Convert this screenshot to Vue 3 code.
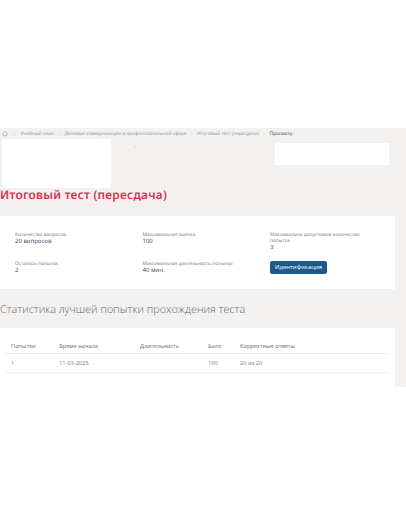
<script setup>
const crumbs = ['Учебный план', 'Деловые коммуникации в профессиональной сфере', 'Итоговый тест (пересдача)']
const facts = [
  { label: 'Количество вопросов', value: '20 вопросов' },
  { label: 'Максимальная оценка', value: '100' },
  { label: 'Максимально допустимое количество попыток', value: '3' },
  { label: 'Осталось попыток', value: '2' },
  { label: 'Максимальная длительность попытки', value: '40 мин.' },
]
const heads = ['Попытки', 'Время начала', 'Длительность', 'Балл', 'Корректные ответы']
const cells = ['1', '11-03-2025', '', '100', '20 из 20']
</script>

<template>
  <div class="page">
    <div class="shell">
      <nav class="crumbs">
        <svg class="home" viewBox="0 0 12 12" width="6" height="7" fill="none" stroke="#8a8f94" stroke-width="1">
          <path d="M1 6 6 1.5 11 6M2.5 5v5.5h7V5" />
        </svg>
        <template v-for="c in crumbs" :key="c">
          <span class="sep">›</span>
          <span>{{ c }}</span>
        </template>
        <span class="sep">›</span>
        <span class="current">Просмотр</span>
      </nav>

      <div class="top">
        <div class="logo-box"></div>
        <span class="top-sep">›</span>
        <div class="side-box"></div>
      </div>

      <h1 class="title">Итоговый тест (пересдача)</h1>

      <section class="card facts">
        <div v-for="f in facts" :key="f.label" class="fact">
          <div class="label">{{ f.label }}</div>
          <div class="value">{{ f.value }}</div>
        </div>
        <div class="fact">
          <button class="btn">Идентификация</button>
        </div>
      </section>

      <h2 class="subtitle">Статистика лучшей попытки прохождения теста</h2>

      <section class="card stats">
        <div class="row head">
          <span v-for="h in heads" :key="h">{{ h }}</span>
        </div>
        <div class="row body">
          <span v-for="(c, i) in cells" :key="i">{{ c }}</span>
        </div>
      </section>
    </div>
  </div>
</template>

<style>
html, body { margin: 0; background: #fff; }
</style>

<style scoped>
.page {
  width: 406px;
  height: 516px;
  padding-top: 128px;
  box-sizing: border-box;
  background: #fff;
  font-family: "Open Sans", "Noto Sans", sans-serif;
  text-rendering: geometricPrecision;
  overflow: hidden;
}
.shell {
  height: 259px;
  background: #f2f1f0;
  overflow: hidden;
}
.crumbs {
  height: 11px;
  display: flex;
  align-items: center;
  padding-left: 2px;
  font-size: 4.75px;
  color: #8d9195;
  white-space: nowrap;
}
.home { margin-right: 1px; }
.sep { margin: 0 4.5px 0 4.5px; color: #b5b8ba; }
.sep:first-of-type { margin-right: 5.5px; }
.current { color: #43474b; }
.top {
  display: flex;
  align-items: flex-start;
  height: 49px;
}
.logo-box {
  width: 109px;
  height: 49px;
  margin-left: 2px;
  background: #fff;
}
.top-sep {
  margin: 3px 0 0 23px;
  font-size: 8px;
  line-height: 10px;
  color: #d2d2d2;
}
.side-box {
  width: 114px;
  height: 22px;
  margin: 4px 0 0 139px;
  background: #fff;
}
.title {
  margin: 0;
  height: 28px;
  font-family: "Noto Sans", sans-serif;
  font-size: 11.9px;
  line-height: 15px;
  font-weight: 600;
  letter-spacing: 0.25px;
  color: #d8324f;
  white-space: nowrap;
}
.card {
  width: 395px;
  background: #fff;
}
.facts {
  box-sizing: border-box;
  height: 73px;
  padding: 15.5px 15px 0;
  display: grid;
  grid-template-columns: 127.5px 127.5px 110px;
  grid-template-rows: 28px 28px;
  row-gap: 1px;
}
.label {
  font-size: 4.8px;
  line-height: 6px;
  color: #70757a;
}
.value {
  margin-top: 0.5px;
  font-size: 6px;
  line-height: 6.5px;
  color: #39434d;
}
.btn {
  display: block;
  width: 57px;
  height: 13px;
  padding: 0;
  border: 0;
  border-radius: 2px;
  background: #1d5a8c;
  color: #fff;
  font-family: inherit;
  font-size: 6px;
  line-height: 13px;
  text-align: center;
}
.subtitle {
  margin: 0;
  height: 39px;
  padding-top: 12px;
  box-sizing: border-box;
  font-family: "Open Sans", sans-serif;
  font-size: 10.85px;
  line-height: 18px;
  font-weight: 300;
  color: #5f6367;
  white-space: nowrap;
}
.stats {
  height: 59px;
  padding: 0 7px 0 6px;
  box-sizing: border-box;
}
.row {
  display: grid;
  grid-template-columns: 48px 81px 68px 32px 1fr;
  padding-left: 5px;
  font-size: 5.7px;
  color: #777b80;
  border-bottom: 1px solid #ececec;
}
.head { height: 25px; align-items: end; line-height: 14px; color: #5f6368; }
.body { height: 18px; align-items: center; }
</style>
